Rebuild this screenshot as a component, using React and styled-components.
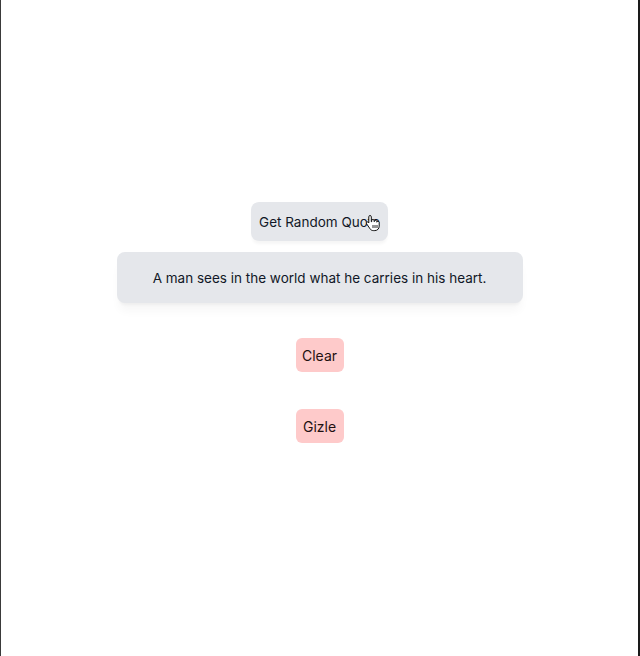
import { useState } from 'react';
import styled, { createGlobalStyle } from 'styled-components';

const GlobalStyle = createGlobalStyle`
  html, body {
    margin: 0;
    padding: 0;
    background: #ffffff;
  }
  body {
    font-family: Inter, "Noto Sans", "Liberation Sans", sans-serif;
    color: #111827;
  }
`;

const Frame = styled.div`
  box-sizing: border-box;
  width: 640px;
  height: 656px;
  border-left: 1px solid #3a3a3a;
  border-right: 2px solid #1a1a1a;
  display: flex;
  flex-direction: column;
  align-items: center;
  padding-top: 202px;
`;

const QuoteButton = styled.button`
  position: relative;
  box-sizing: border-box;
  height: 39px;
  padding: 0 8px;
  border: none;
  border-radius: 8px;
  background: #e5e7eb;
  font-family: inherit;
  font-size: 13.5px;
  color: #111827;
  box-shadow: 0 4px 3px -1px rgba(0, 0, 0, 0.04);
  cursor: pointer;
`;

const Cursor = styled.svg`
  position: absolute;
  left: 114px;
  top: 12px;
  width: 16px;
  height: 18px;
`;

const QuoteCard = styled.div`
  box-sizing: border-box;
  width: 406px;
  height: 51px;
  margin-top: 11px;
  border-radius: 8px;
  background: #e5e7eb;
  display: flex;
  align-items: center;
  justify-content: center;
  font-size: 13.5px;
  color: #111827;
  box-shadow: 0 10px 10px -2px rgba(0, 0, 0, 0.035), 0 4px 3px -2px rgba(0, 0, 0, 0.04);
`;

const PinkButton = styled.button`
  box-sizing: border-box;
  height: 34px;
  width: 48px;
  margin-top: ${p => p.$gap}px;
  padding: 0;
  border: none;
  border-radius: 6px;
  background: #fecaca;
  font-family: inherit;
  font-size: 14px;
  color: #1f1111;
  cursor: pointer;
`;

export default function App() {
  const [quote, setQuote] = useState('A man sees in the world what he carries in his heart.');
  const [hidden, setHidden] = useState(false);

  return (
    <>
      <GlobalStyle />
      <Frame>
        <QuoteButton>
          Get Random Quote
          <Cursor viewBox="0 0 16 18">
            <path
              d="M5 1.5c.8 0 1.3.5 1.3 1.3v5l.4-.1V6.6c0-.7.5-1.2 1.2-1.2s1.2.5 1.2 1.2v1l.3-.1c0-.7.5-1.1 1.2-1.1s1.2.5 1.2 1.2v.6c.2-.6.7-.9 1.2-.9.7 0 1.2.5 1.2 1.2v3.6c0 2.6-1.8 4.5-4.4 4.5H8.3c-1.4 0-2.4-.6-3.2-1.700L1.6 9.8c-.4-.6-.3-1.3.2-1.6.5-.4 1.2-.3 1.6.2l.4.6V2.8c0-.8.5-1.3 1.2-1.3z"
              fill="#ffffff"
              stroke="#111111"
              strokeWidth="1"
            />
            <path d="M8 11v3M10 11v3M12 11v3" stroke="#111111" strokeWidth="0.9" />
          </Cursor>
        </QuoteButton>
        <QuoteCard>{hidden ? '' : quote}</QuoteCard>
        <PinkButton $gap={35} onClick={() => setQuote('')}>Clear</PinkButton>
        <PinkButton $gap={37} onClick={() => setHidden(!hidden)}>Gizle</PinkButton>
      </Frame>
    </>
  );
}
